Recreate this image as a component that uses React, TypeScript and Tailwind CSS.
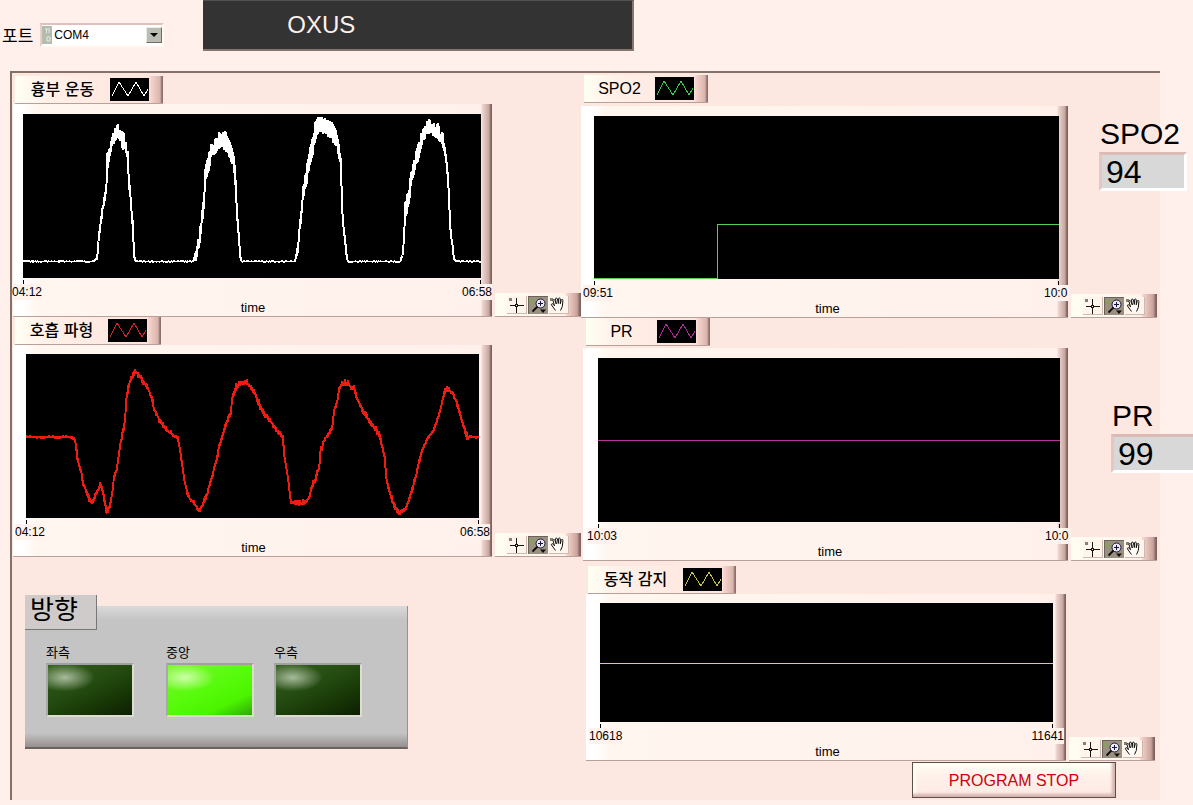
import { useId, type ReactNode } from "react";
import clsx from "clsx";

type Point = [x: number, top: number, bottom: number];

// chest band: upper and lower edge of the noisy signal
const chest: Point[] = [
  [0, 147, 148], [71, 147, 148], [74, 142, 146], [76, 117, 124], [80, 86, 96], [83, 71, 80],
  [84, 37, 62], [86, 31, 45], [89, 19, 33], [92, 14, 27], [95, 9, 28], [98, 14, 29],
  [101, 19, 38], [105, 36, 48], [106, 56, 73], [108, 84, 94], [110, 106, 116], [111, 139, 143],
  [113, 147, 148], [170, 147, 148], [173, 134, 147], [176, 117, 134], [179, 96, 112], [181, 78, 90],
  [182, 54, 68], [185, 42, 62], [188, 29, 44], [192, 23, 41], [195, 19, 36], [199, 16, 34],
  [203, 18, 38], [207, 27, 45], [211, 41, 53], [213, 60, 77], [214, 93, 102], [216, 116, 124],
  [217, 139, 144], [219, 147, 148], [272, 147, 148], [275, 126, 138], [277, 104, 115], [279, 88, 102],
  [280, 70, 84], [283, 57, 76], [285, 42, 60], [289, 24, 44], [292, 8, 31], [295, 3, 19],
  [299, 3, 20], [304, 5, 21], [309, 8, 28], [313, 15, 31], [316, 30, 42], [318, 44, 58],
  [319, 76, 86], [320, 104, 113], [322, 121, 128], [324, 140, 146], [325, 147, 148], [377, 147, 148],
  [380, 137, 143], [382, 88, 106], [385, 76, 96], [388, 58, 76], [390, 45, 63], [394, 34, 51],
  [397, 21, 38], [401, 13, 27], [404, 7, 21], [406, 4, 20], [409, 9, 22], [415, 9, 25],
  [420, 19, 32], [423, 35, 46], [425, 55, 66], [426, 75, 82], [427, 107, 114], [429, 123, 130],
  [431, 142, 146], [433, 147, 148], [458, 147, 148],
];

const breathLine: [number, number][] = [
  [0, 83], [46, 83], [49, 86], [51, 99], [53, 111], [55, 116], [57, 128], [61, 139], [66, 149],
  [69, 141], [72, 136], [74, 130], [76, 132], [78, 143], [81, 159], [85, 146], [88, 124], [91, 113],
  [94, 91], [97, 76], [99, 66], [100, 46], [102, 34], [104, 28], [107, 21], [109, 17], [112, 20],
  [116, 25], [121, 33], [126, 43], [128, 54], [132, 63], [137, 71], [142, 77], [147, 81], [152, 83],
  [154, 96], [157, 116], [159, 129], [163, 143], [167, 148], [171, 153], [173, 157], [176, 152],
  [181, 139], [185, 126], [189, 111], [192, 99], [193, 91], [197, 79], [202, 64], [205, 58],
  [206, 44], [210, 33], [214, 29], [217, 27], [222, 29], [227, 36], [231, 44], [236, 56], [241, 63],
  [246, 69], [251, 76], [257, 84], [259, 106], [262, 123], [265, 148], [269, 149], [279, 149],
  [283, 143], [286, 131], [288, 129], [291, 119], [293, 114], [294, 99], [298, 86], [306, 75],
  [308, 56], [311, 48], [313, 34], [317, 29], [322, 29], [325, 33], [328, 33], [331, 44], [337, 56],
  [344, 68], [354, 81], [357, 96], [359, 104], [360, 123], [364, 139], [369, 153], [374, 159],
  [380, 154], [384, 141], [389, 126], [393, 106], [397, 94], [402, 83], [407, 78], [412, 63],
  [416, 49], [418, 38], [421, 34], [427, 39], [431, 49], [436, 66], [438, 73], [441, 82], [444, 83],
  [453, 83],
];
// resting stretches at both ends are steadier than the waves
const breath: Point[] = breathLine.map(([x, y]) => (y === 83 ? [x, y - 2, y + 2] : [x, y - 4, y + 4]));

// zigzag between the two edges with a repeatable jitter
function noisyPath(points: Point[], noise: number) {
  const out: string[] = [];
  for (let i = 0; i < points.length - 1; i++) {
    const [x0, t0, b0] = points[i];
    const [x1, t1, b1] = points[i + 1];
    const steps = Math.max(1, (x1 - x0) * 2);
    for (let s = 0; s < steps; s++) {
      const k = s / steps;
      const top = t0 + (t1 - t0) * k;
      const bottom = b0 + (b1 - b0) * k;
      const x = x0 + (x1 - x0) * k;
      const r = Math.abs(Math.sin(x * 127.1 + i * 31.7) * 43758.5) % 1;
      const amp = Math.min(noise, (bottom - top) / 2) * (noise > 4 ? r * r : Math.sqrt(r));
      out.push(`${x.toFixed(1)},${(s % 2 ? bottom - amp : top + amp).toFixed(1)}`);
    }
  }
  const last = points[points.length - 1];
  out.push(`${last[0]},${(last[1] + last[2]) / 2}`);
  return out.join(" ");
}

function Trace({ points, color, width = 1 }: { points: string; color: string; width?: number }) {
  return (
    <polyline
      points={points}
      fill="none"
      stroke={color}
      strokeWidth={width}
      strokeLinejoin="bevel"
      shapeRendering="crispEdges"
      vectorEffect="non-scaling-stroke"
    />
  );
}

function PlotLegend({ text, color, className }: { text: string; color: string; className?: string }) {
  return (
    <div
      className={clsx(
        "flex h-[28px] items-center border-b border-[#b9a09b] pr-[14px]",
        "bg-[linear-gradient(to_left,#8c706b_0,#8c706b_1px,#d9b5ae_3px,#f6d3cb_12px,transparent_14px),linear-gradient(to_right,#fffff4,#fff0e8_30px,#fde3dc)]",
        className,
      )}
    >
      <span className="flex-1 whitespace-nowrap text-center text-base font-medium leading-6">{text}</span>
      <svg className="h-[23px] w-[39px] bg-black" viewBox="0 0 39 23" aria-hidden="true">
        <polyline
          points="2,18 9,4 18,18 26,4 34,18 38,11"
          fill="none"
          stroke={color}
          strokeWidth="1"
          shapeRendering="crispEdges"
        />
      </svg>
    </div>
  );
}

function GraphPalette() {
  return (
    <div className="flex h-[24px] w-[86px] shrink-0 items-center gap-px border-b border-[#b9a09b] bg-[linear-gradient(to_left,#7d625d_0,#7d625d_1px,#c9a49d_4px,#f6d3cb_14px,transparent_16px),linear-gradient(to_right,#fffdf2,#fff0e8)] pl-3">
      <button type="button" aria-label="Cursor" className="h-[18px] w-5 border-b border-r border-[#cfb8b0] bg-[#fff5ec]">
        <svg viewBox="0 0 19 17" className="h-[17px] w-[19px]" shapeRendering="crispEdges">
          <rect x="2" y="2" width="3" height="3" fill="#7f8272" />
          <path d="M9.5 2v15M3 9.5h14" stroke="#1a1412" strokeWidth="1" />
          <rect x="8.5" y="8.5" width="2" height="2" fill="#fff5ec" stroke="#1a1412" />
        </svg>
      </button>
      <button type="button" aria-label="Zoom" className="h-[18px] w-5 border-l border-t border-[#6c625a] bg-[#99907f]">
        <svg viewBox="0 0 19 17" className="h-[17px] w-[19px]">
          <rect x="1" y="2" width="4" height="4" fill="#87a05c" />
          <circle cx="11.500" cy="6.500" r="4.500" fill="#ece8f6" stroke="#171430" strokeWidth="1" />
          <path d="M9 6.500h5M11.500 4v5" stroke="#171430" strokeWidth="1" />
          <path d="M8.500 9.500L3.500 14.500" stroke="#0d0b0b" strokeWidth="1.8" />
          <path d="M11 12.500h6l-3 3.500z" fill="#0d0b0b" />
        </svg>
      </button>
      <button type="button" aria-label="Pan" className="h-[18px] w-5 border-b border-r border-[#cfb8b0] bg-[#fff5ec]">
        <svg viewBox="0 0 19 17" className="h-[17px] w-[19px]">
          <rect x="1" y="2" width="3" height="3" fill="#7f8272" />
          <path
            d="M6.500 14.500L2.500 9C2 7.800 3.400 7.200 4.200 8.200L5.500 9.800L4 4.500C3.800 3.300 5.300 3 5.800 4.200L7.300 8L6.500 3C6.500 1.800 8.200 1.700 8.500 3L9.300 7.500L9.500 2.800C9.700 1.700 11.200 1.800 11.300 3V7.800L12.200 4C12.700 3 14 3.300 13.900 4.500L13.300 10.500L11.500 14.500"
            fill="#fffdf8"
            stroke="#14100e"
            strokeWidth="1"
          />
        </svg>
      </button>
    </div>
  );
}

const axisText = "whitespace-nowrap bg-[#fff2ed] text-xs leading-4";

function AxisLabels({ start, end, cutEnd }: { start: string; end: string; cutEnd?: boolean }) {
  return (
    <div className="-mx-[11px] flex justify-between pt-0.5">
      <div className="flex flex-col">
        <span className="ml-[11px] h-1 w-px bg-black" />
        <span className={axisText}>{start}</span>
      </div>
      <div className={clsx("flex flex-col", cutEnd && "w-[26px]")}>
        <span className="mr-[11px] h-1 w-px self-end bg-black" />
        <span className={axisText}>{end}</span>
      </div>
    </div>
  );
}

interface GraphProps {
  start: string;
  end: string;
  cutEnd?: boolean;
  viewBox: string;
  padding: string;
  plotHeight: string;
  children: ReactNode;
  readout?: ReactNode;
  className?: string;
}

function Graph({ start, end, cutEnd, viewBox, padding, plotHeight, children, readout, className }: GraphProps) {
  return (
    <div className={clsx("flex gap-[3px]", className)}>
      <div
        className={clsx(
          "min-w-0 flex-1 border-b border-[#b9a09b]",
          "bg-[linear-gradient(to_left,#7d625d_0,#7d625d_1px,#c4a69f_3px,#f2d8d2_10px,transparent_11px),linear-gradient(to_right,#fff_0,#fff_10px,#fff6ef_24px,#fff0ec)]",
          padding,
        )}
      >
        <svg className={clsx("block w-full bg-black", plotHeight)} viewBox={viewBox} preserveAspectRatio="none">
          {children}
        </svg>
        <AxisLabels start={start} end={end} cutEnd={cutEnd} />
        <p className="pl-0.5 text-center text-[13px] leading-4">time</p>
      </div>
      <div className="flex w-[86px] shrink-0 flex-col justify-between">
        <div>{readout}</div>
        <GraphPalette />
      </div>
    </div>
  );
}

function Readout({ label, value, className }: { label: string; value: number; className?: string }) {
  const id = useId();
  return (
    <div className={clsx("w-[88px]", className)}>
      <label htmlFor={id} className="block pl-px text-[30px] leading-9">
        {label}
      </label>
      <output
        id={id}
        className="block h-[39px] border-[3px] border-b-white border-l-[#e6c6c0] border-r-white border-t-[#dcbab5] bg-[#d8d8d8] pl-1 text-[32px] leading-[34px]"
      >
        {value}
      </output>
    </div>
  );
}

function Led({ label, on, className }: { label: string; on?: boolean; className?: string }) {
  return (
    <div className={clsx("flex w-[88px] flex-col gap-0.5", className)}>
      <span className="text-[13px] leading-4">{label}</span>
      <div
        role="img"
        aria-label={`${label} ${on ? "on" : "off"}`}
        className={clsx(
          "h-[54px] border-2 border-b-[#dcdccf] border-l-[#a9a9a9] border-r-[#dcdccf] border-t-[#a0a0a0]",
          on
            ? "bg-[radial-gradient(ellipse_30px_14px_at_20%_25%,#ccffa8,transparent),linear-gradient(155deg,#7cf52c_0%,#55fb0a_50%,#4cf400_75%,#2ea808_100%)]"
            : "bg-[radial-gradient(ellipse_30px_14px_at_20%_25%,#a9bb9d,transparent),linear-gradient(155deg,#34601f_0%,#234a10_45%,#183806_70%,#0c1f03_100%)]",
        )}
      />
    </div>
  );
}

function DirectionPanel() {
  return (
    <section className="w-[383px]">
      <h2 className="relative z-10 h-[35px] w-[72px] border-b border-r border-[#777] bg-[#cfcbcb] pl-[5px] text-[26px] leading-[30px]">
        방향
      </h2>
      <div className="-mt-[24px] flex border-b-2 border-r border-b-[#6b6262] border-r-[#9a8f8f] bg-[linear-gradient(to_bottom,#dadada_0,#c4c4c4_14px,#c4c4c4_calc(100%-14px),#968f8f_100%)] pb-[30px] pl-[21px] pt-[39px]">
        <Led label="좌측" />
        <Led label="중앙" on className="ml-8" />
        <Led label="우측" className="ml-5" />
      </div>
    </section>
  );
}

function PortSelect() {
  return (
    <div className="flex items-center gap-1 pl-0.5 pt-[23px]">
      <label htmlFor="port" className="pt-1 text-[17px] leading-5">
        포트
      </label>
      <div className="ml-[3px] flex h-[24px] w-[124px] items-center border-2 border-b-[#fffaf2] border-l-[#e8cdc8] border-r-[#fffaf2] border-t-[#dfc0bb] bg-white">
        <svg viewBox="0 0 10 18" className="h-[18px] w-[10px] bg-[#b4bcae]" aria-hidden="true">
          <path d="M3 3h3M4.500 3v4M7 2v5M5 11h3v4h-3z" fill="none" stroke="#e4ebdf" />
        </svg>
        <div className="grid h-full flex-1 items-center">
          <select
            id="port"
            defaultValue="COM4"
            className="col-start-1 row-start-1 h-5 w-full appearance-none bg-white pl-0.5 text-xs leading-4 outline-none"
          >
            <option>COM4</option>
          </select>
          <span className="pointer-events-none col-start-1 row-start-1 flex size-4 items-center justify-center justify-self-end border border-b-[#6d6d66] border-l-[#ecece6] border-r-[#6d6d66] border-t-[#ecece6] bg-[#b9bdb2]">
            <svg viewBox="0 0 8 4" className="h-1 w-2" aria-hidden="true">
              <path d="M0 0h8L4 4z" fill="#000" />
            </svg>
          </span>
        </div>
      </div>
    </div>
  );
}

export default function App() {
  return (
    <div className="min-h-screen overflow-hidden bg-[#fff0eb] font-['Liberation_Sans','Noto_Sans_CJK_KR',sans-serif] text-black">
      <header className="flex h-[71px] items-start">
        <PortSelect />
        <h1 className="ml-[39px] h-[51px] w-[431px] border-b-2 border-r-2 border-t border-[#857770] border-t-[#55504e] bg-[#333] pl-[84px] text-2xl font-normal leading-[48px] text-[#fff0eb]">
          OXUS
        </h1>
      </header>

      <main className="ml-[10px] mr-[33px] grid grid-cols-[569fr_579fr] border-l-2 border-t-2 border-[#857068] bg-[#fde8e1]">
        <div className="min-w-0 pl-px pt-[3px]">
          <PlotLegend text="흉부 운동" color="#ffffff" className="ml-0.5 w-[148px]" />
          <Graph start="04:12" end="06:58" viewBox="0 0 458 164" padding="pt-[10px] pl-[10px] pr-[11px]" plotHeight="h-[164px]">
            <Trace points={noisyPath(chest, 8)} color="#ffffff" width={2} />
          </Graph>

          <PlotLegend text="호흡 파형" color="#d8232a" className="ml-0.5 w-[146px]" />
          <Graph start="04:12" end="06:58" viewBox="0 0 453 164" padding="pt-[9px] pl-[13px] pr-[13px]" plotHeight="h-[164px]">
            <Trace points={noisyPath(breath, 4)} color="#f01c14" width={2} />
          </Graph>

          <div className="pl-3 pt-[38px]">
            <DirectionPanel />
          </div>
        </div>

        <div className="flex min-w-0 flex-col pb-0.5 pr-[3px] pt-0.5">
          <PlotLegend text="SPO2" color="#35c94a" className="ml-[3px] w-[124px]" />
          <Graph
            start="09:51"
            end="10:0"
            cutEnd
            viewBox="0 0 465 163"
            padding="pt-[10px] pl-[13px] pr-[9px]"
            plotHeight="h-[163px]"
            className="mt-[3px]"
            readout={<Readout label="SPO2" value={94} className="ml-7 pt-[10px]" />}
          >
            <Trace points="0,162.5 123.5,162.5 123.5,108.5 465,108.5" color="#56cf56" />
          </Graph>

          <PlotLegend text="PR" color="#b32a9c" className="ml-[5px] w-[124px]" />
          <Graph
            start="10:03"
            end="10:0"
            cutEnd
            viewBox="0 0 462 164"
            padding="pt-[10px] pl-[15px] pr-[8px]"
            plotHeight="h-[164px]"
            className="ml-0.5 mt-0.5"
            readout={<Readout label="PR" value={99} className="ml-10 pt-[50px]" />}
          >
            <Trace points="0,82.5 462,82.5" color="#b8359f" />
          </Graph>

          <PlotLegend text="동작 감지" color="#c9c43c" className="ml-[7px] mt-[5px] w-[148px]" />
          <Graph
            start="10618"
            end="11641"
            viewBox="0 0 453 119"
            padding="pt-[9px] pl-[14px] pr-[13px]"
            plotHeight="h-[119px]"
            className="ml-[5px] mr-0.5"
          >
            <Trace points="0,60.5 453,60.5" color="#dcd84c" />
          </Graph>

          <button
            type="button"
            className="mr-[41px] mt-px h-[36px] w-[204px] self-end border border-[#5d4c48] bg-[linear-gradient(to_bottom,#fffef4,#fff1ea_40%,#fde9e2)] pt-0.5 text-base text-[#cc0010] shadow-[inset_-3px_-3px_3px_#d2b4ad,inset_3px_3px_3px_#fffff6]"
          >
            PROGRAM STOP
          </button>
        </div>
      </main>
    </div>
  );
}
